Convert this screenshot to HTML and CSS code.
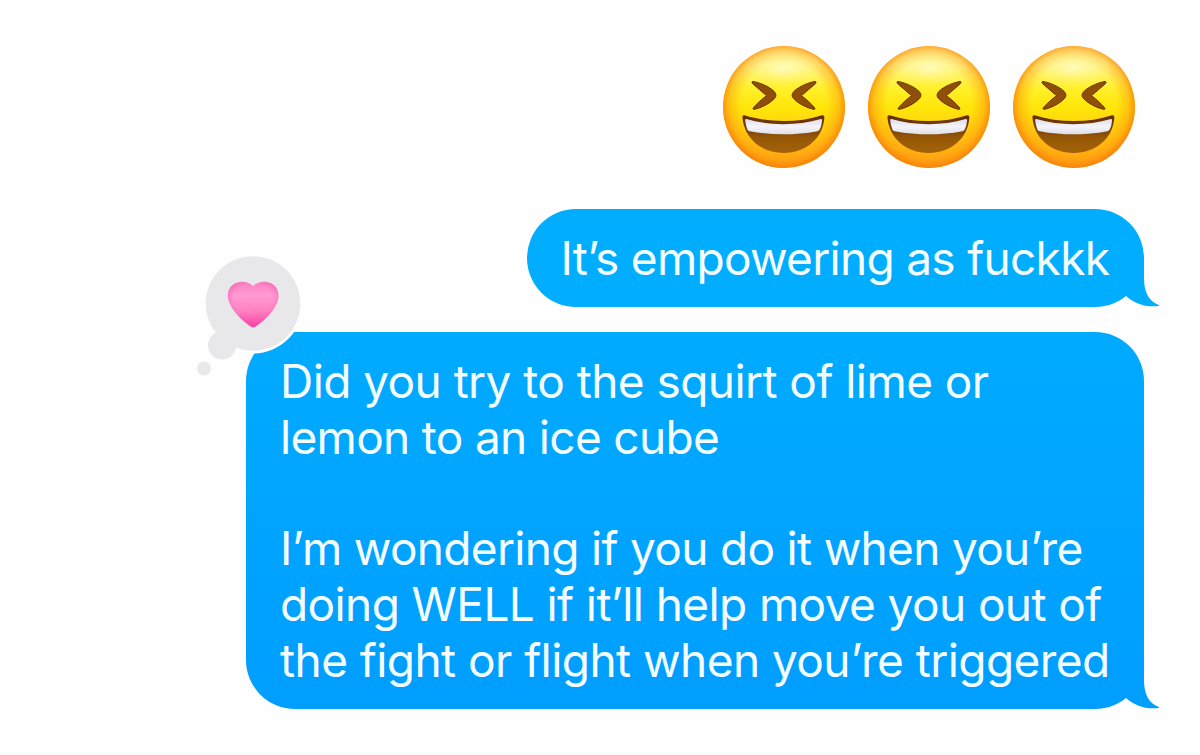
FILE: index.html
```html
<!DOCTYPE html>
<html lang="en">
<head>
    <meta charset="UTF-8">
    <meta name="viewport" content="width=device-width, initial-scale=1.0">
    <title>Messages</title>
    <link rel="stylesheet" href="styles.css">
</head>
<body>
    <!-- Shared shapes -->
    <svg class="defs" width="0" height="0" aria-hidden="true">
        <defs>
            <linearGradient id="faceFill" x1="0" y1="0" x2="0" y2="1">
                <stop offset="0" stop-color="#fff4a0"/>
                <stop offset="0.15" stop-color="#fff68c"/>
                <stop offset="0.35" stop-color="#fff02a"/>
                <stop offset="0.5" stop-color="#ffe60a"/>
                <stop offset="0.75" stop-color="#ffc90f"/>
                <stop offset="1" stop-color="#ffa014"/>
            </linearGradient>
            <radialGradient id="faceEdge" cx="0.5" cy="0.48" r="0.53">
                <stop offset="0.66" stop-color="#ff9a10" stop-opacity="0"/>
                <stop offset="0.84" stop-color="#ff9a10" stop-opacity="0.45"/>
                <stop offset="0.93" stop-color="#fb8c0c" stop-opacity="0.85"/>
                <stop offset="1" stop-color="#f17c0a" stop-opacity="0.95"/>
            </radialGradient>
            <radialGradient id="faceShine" cx="0.5" cy="0.5" r="0.5">
                <stop offset="0" stop-color="#fffbc8" stop-opacity="0.85"/>
                <stop offset="1" stop-color="#fff680" stop-opacity="0"/>
            </radialGradient>
            <linearGradient id="mouthFill" x1="0" y1="0" x2="0" y2="1">
                <stop offset="0" stop-color="#612b06"/>
                <stop offset="0.4" stop-color="#824506"/>
                <stop offset="0.6" stop-color="#965806"/>
                <stop offset="1" stop-color="#a56308"/>
            </linearGradient>
            <linearGradient id="teethFill" x1="0" y1="0" x2="0" y2="1">
                <stop offset="0" stop-color="#dcdde8"/>
                <stop offset="0.5" stop-color="#f4f4fa"/>
                <stop offset="1" stop-color="#dcdde8"/>
            </linearGradient>
            <symbol id="laugh" viewBox="0 0 122 122">
                <circle cx="61" cy="61" r="61" fill="url(#faceFill)"/>
                <circle cx="61" cy="61" r="61" fill="url(#faceEdge)"/>
                <ellipse cx="61" cy="22" rx="40" ry="17" fill="url(#faceShine)"/>
                <path id="eye" d="M29.8 35.4 C36 36.5 45.5 40 51 45.3 Q54.6 49.2 51.5 52.4 C46.5 57.8 39 61.5 31.2 63.4 Q29.4 63.4 30.3 61.8 C34.5 57 39 53 43.6 49.7 C39 45.5 34 41.8 29.4 37.4 Q28.3 35.6 29.8 35.4 Z" fill="#8f4f09" stroke="#6b3606" stroke-width="1"/>
                <use href="#eye" transform="translate(122 0) scale(-1 1)"/>
                <path d="M21.5 69.2 C46 77 76 77 99 69.2 Q101.5 68.8 101.4 71.5 C100 92.5 83 106.9 60.6 106.9 C38 106.9 21.3 92.5 19.4 71.5 Q19.2 68.8 21.5 69.2 Z" fill="url(#mouthFill)"/>
                <path d="M23.4 73 C47 79.9 74 79.9 97.8 73 Q99.3 72.8 99.1 74.4 Q98.5 80 96.7 83.6 Q96.1 84.8 94.3 85.2 C72 89.4 49 89.4 27 85.2 Q25 84.8 24.4 83.4 Q22.8 79.5 22.2 74.4 Q22 72.8 23.4 73 Z" fill="url(#teethFill)"/>
            </symbol>
            <symbol id="tail" viewBox="0 0 34 56">
                <path d="M0 45 C8 52.5 20 56.6 32.5 55 Q34 54.6 32.6 54 C23 50 18.3 42 18 28 L18 7 L10 7 L0 36 Z" fill="currentColor"/>
            </symbol>
            <linearGradient id="heartFill" x1="0" y1="0" x2="0" y2="1">
                <stop offset="0" stop-color="#f97fc2"/>
                <stop offset="0.3" stop-color="#ff9bd3"/>
                <stop offset="0.65" stop-color="#ff80c1"/>
                <stop offset="1" stop-color="#fa3ea2"/>
            </linearGradient>
            <radialGradient id="heartEdge" cx="0.5" cy="0.42" r="0.58">
                <stop offset="0.65" stop-color="#f55bb0" stop-opacity="0"/>
                <stop offset="1" stop-color="#ee48a2" stop-opacity="0.5"/>
            </radialGradient>
            <path id="heart" d="M57.2 34.2 C61 29.5 69 28.3 75 31.2 C82 34.6 84.4 43 81 51 C77 60.5 67.5 69.5 58.8 74.9 Q57.2 75.8 55.6 74.9 C47 69.5 37.3 60.5 33.4 51 C30 43 32.3 34.6 39.4 31.2 C45.4 28.3 53.4 29.5 57.2 34.2 Z"/>
        </defs>
    </svg>

    <main class="thread">
        <div class="emojis">
            <svg class="emoji" role="img" aria-label="laughing"><use href="#laugh"/></svg>
            <svg class="emoji" role="img" aria-label="laughing"><use href="#laugh"/></svg>
            <svg class="emoji" role="img" aria-label="laughing"><use href="#laugh"/></svg>
        </div>

        <div class="bubble bubble-short">
            <svg class="tail"><use href="#tail"/></svg>
            <p class="line l1">It’s empowering as fuckkk</p>
        </div>

        <div class="bubble bubble-long">
            <svg class="tail"><use href="#tail"/></svg>
            <p class="line l2">Did you try to the squirt of lime or</p>
            <p class="line l3">lemon to an ice cube</p>
            <p class="line blank"></p>
            <p class="line l4">I’m wondering if you do it when you’re</p>
            <p class="line l5">doing WELL if it’ll help move you out of</p>
            <p class="line l6">the fight or flight when you’re triggered</p>

            <!-- Heart reaction -->
            <svg class="reaction" viewBox="0 0 108 124" role="img" aria-label="heart">
                <circle cx="57" cy="51.5" r="50" fill="#fefefe"/>
                <g fill="#e8e8ea">
                    <circle cx="57" cy="51.5" r="47.3"/>
                    <circle cx="26" cy="93.5" r="14"/>
                    <circle cx="8" cy="116.5" r="6.9"/>
                </g>
                <use href="#heart" fill="url(#heartFill)"/>
                <use href="#heart" fill="url(#heartEdge)"/>
            </svg>
        </div>
    </main>
</body>
</html>
```
FILE: styles.css
```css
* {
    box-sizing: border-box;
    margin: 0;
    padding: 0;
}

body {
    font-family: Inter, "Liberation Sans", sans-serif;
    background-color: #fefefe;
    overflow: hidden;
}

.defs {
    position: absolute;
}

.thread {
    display: flex;
    flex-direction: column;
    align-items: flex-end;
    padding: 45.5px 56px 0 0;
}

.emojis {
    display: flex;
    gap: 23px;
    margin: 0 9.5px 41.5px 0;
}

.emoji {
    width: 122px;
    height: 122px;
}

.bubble {
    position: relative;
    border-radius: 49px;
    color: #f4feff;
    font-size: 46px;
    line-height: 55.8px;
}

.bubble-short {
    width: 617px;
    height: 97.5px;
    padding: 22px 0 0 33.5px;
    margin-bottom: 25.5px;
    background-color: #00adff;
}

.bubble-long {
    width: 898px;
    height: 377px;
    padding: 22px 0 0 34px;
    background: linear-gradient(#00abff, #009eff);
}

.line {
    position: relative;
    white-space: nowrap;
}

.blank {
    height: 55.8px;
}

/* Tracking per line */
.l1 {
    letter-spacing: -0.7px;
}

.l2 {
    letter-spacing: -0.56px;
}

.l3 {
    letter-spacing: -0.68px;
}

.l4 {
    letter-spacing: -0.69px;
}

.l5 {
    letter-spacing: -0.6px;
}

.l6 {
    letter-spacing: -0.56px;
}

.tail {
    position: absolute;
    right: -16px;
    bottom: 0;
    width: 34px;
    height: 56px;
}

.bubble-short .tail {
    color: #00adff;
}

.bubble-long .tail {
    color: #009eff;
}

.reaction {
    position: absolute;
    left: -50px;
    top: -80px;
    width: 108px;
    height: 124px;
}
```
